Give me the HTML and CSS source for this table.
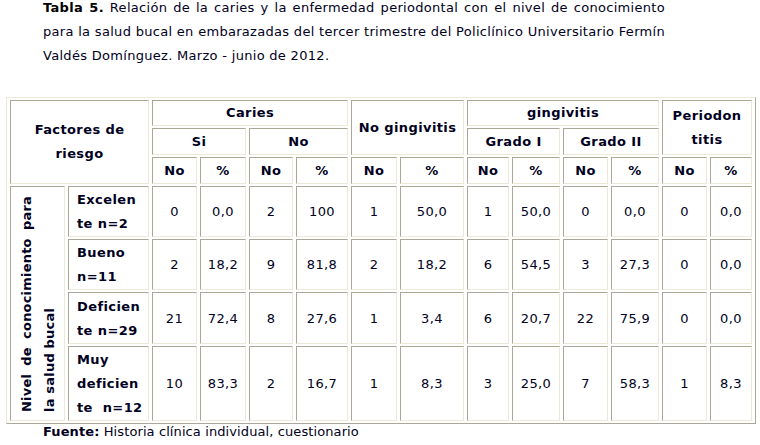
FILE: index.html
```html
<!DOCTYPE html>
<html lang="es">
<head>
<meta charset="utf-8">
<title>Tabla 5</title>
<link rel="stylesheet" href="styles.css">
</head>
<body>
<p class="caption">
  <span class="line"><b>Tabla 5.</b> Relación de la caries y la enfermedad periodontal con el nivel de conocimiento</span>
  <span class="line">para la salud bucal en embarazadas del tercer trimestre del Policlínico Universitario Fermín</span>
  <span class="last">Valdés Domínguez. Marzo - junio de 2012.</span>
</p>
<table class="data">
  <colgroup>
    <col class="c1"><col class="c2"><col class="c3"><col class="c4"><col class="c5"><col class="c6"><col class="c7">
    <col class="c8"><col class="c9"><col class="c10"><col class="c11"><col class="c12"><col class="c13"><col class="c14">
  </colgroup>
  <tr class="h1">
    <th colspan="2" rowspan="3">Factores de<br>riesgo</th>
    <th colspan="4">Caries</th>
    <th colspan="2" rowspan="2">No gingivitis</th>
    <th colspan="4">gingivitis</th>
    <th colspan="2" rowspan="2">Periodon<br>titis</th>
  </tr>
  <tr class="h2">
    <th colspan="2">Si</th>
    <th colspan="2">No</th>
    <th colspan="2">Grado I</th>
    <th colspan="2">Grado II</th>
  </tr>
  <tr class="h3">
    <th>No</th><th>%</th><th>No</th><th>%</th><th>No</th><th>%</th><th>No</th><th>%</th><th>No</th><th>%</th><th>No</th><th>%</th>
  </tr>
  <tr>
    <th rowspan="4" class="vert"><div class="vtext"><span class="vl1">Nivel de conocimiento para</span><span class="vl2">la salud bucal</span></div></th>
    <th class="lvl">Excelen<br>te n=2</th>
    <td>0</td><td>0,0</td><td>2</td><td>100</td><td>1</td><td>50,0</td><td>1</td><td>50,0</td><td>0</td><td>0,0</td><td>0</td><td>0,0</td>
  </tr>
  <tr>
    <th class="lvl">Bueno<br>n=11</th>
    <td>2</td><td>18,2</td><td>9</td><td>81,8</td><td>2</td><td>18,2</td><td>6</td><td>54,5</td><td>3</td><td>27,3</td><td>0</td><td>0,0</td>
  </tr>
  <tr class="r3">
    <th class="lvl">Deficien<br>te n=29</th>
    <td>21</td><td>72,4</td><td>8</td><td>27,6</td><td>1</td><td>3,4</td><td>6</td><td>20,7</td><td>22</td><td>75,9</td><td>0</td><td>0,0</td>
  </tr>
  <tr>
    <th class="lvl">Muy<br>deficien<br>te&nbsp; n=12</th>
    <td>10</td><td>83,3</td><td>2</td><td>16,7</td><td>1</td><td>8,3</td><td>3</td><td>25,0</td><td>7</td><td>58,3</td><td>1</td><td>8,3</td>
  </tr>
</table>
<p class="source"><b>Fuente:</b> Historia clínica individual, cuestionario</p>
</body>
</html>
```

FILE: styles.css
```css
html, body {
  margin: 0;
  padding: 0;
  background: #ffffff;
}
body {
  font-family: "DejaVu Sans", Verdana, sans-serif;
  font-size: 13px;
  color: #000022;
}
.caption {
  margin: -4px 0 0 43px;
  width: 622px;
  line-height: 24px;
  letter-spacing: 0.3px;
}
.caption .line {
  display: block;
  text-align: justify;
  text-align-last: justify;
}
.caption .last {
  display: block;
}
.caption b {
  color: #000;
}
.data {
  margin: 29px 0 0 6px;
  width: 750px;
  table-layout: fixed;
  border-collapse: separate;
  border-spacing: 3px 2px;
  border: 1px solid;
  border-color: #ece9d8 #aca899 #aca899 #ece9d8;
  letter-spacing: 0.4px;
}
.c1 { width: 55px; }
.c2 { width: 81px; }
.c3 { width: 45px; }
.c4 { width: 46px; }
.c5 { width: 44px; }
.c6 { width: 52px; }
.c7 { width: 46px; }
.c8 { width: 64px; }
.c9 { width: 42px; }
.c10 { width: 48px; }
.c11 { width: 45px; }
.c12 { width: 48px; }
.c13 { width: 45px; }
.c14 { width: 42px; }
.data th, .data td {
  border: 1px solid;
  border-color: #aca899 #ece9d8 #ece9d8 #aca899;
  padding: 1px 0 0;
  line-height: 24px;
  text-align: center;
  vertical-align: middle;
  background: #fff;
  overflow: hidden;
}
.data th {
  font-weight: bold;
  color: #000022;
}
.data td {
  font-weight: normal;
}
.h1 th { padding-top: 0; }
.data .lvl {
  text-align: left;
  padding-left: 8px;
  vertical-align: top;
}
.data .r3 th, .data .r3 td { padding-top: 2px; }
.vert {
  padding: 0;
}
.vtext {
  writing-mode: vertical-rl;
  transform: rotate(180deg);
  height: 216px;
  line-height: 23px;
  margin: 0 auto;
  text-align: left;
  letter-spacing: 0.2px;
}
.vl1 {
  display: block;
  text-align: justify;
  text-align-last: justify;
}
.vl2 {
  display: block;
}
.source {
  margin: 0 0 0 43px;
  line-height: 16px;
  letter-spacing: 0.1px;
}
```
